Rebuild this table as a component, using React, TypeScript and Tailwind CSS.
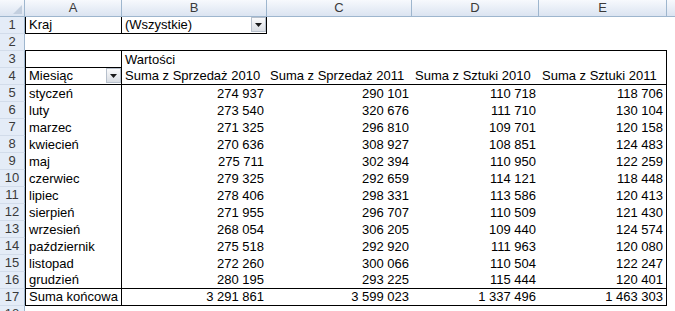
const COLS = "grid grid-cols-[25px_97px_145px_145px_127px_128px_1fr]";

type Row = [string, string, string, string, string];

const DATA: Row[] = [
  ["styczeń", "274 937", "290 101", "110 718", "118 706"],
  ["luty", "273 540", "320 676", "111 710", "130 104"],
  ["marzec", "271 325", "296 810", "109 701", "120 158"],
  ["kwiecień", "270 636", "308 927", "108 851", "124 483"],
  ["maj", "275 711", "302 394", "110 950", "122 259"],
  ["czerwiec", "279 325", "292 659", "114 121", "118 448"],
  ["lipiec", "278 406", "298 331", "113 586", "120 413"],
  ["sierpień", "271 955", "296 707", "110 509", "121 430"],
  ["wrzesień", "268 054", "306 205", "109 440", "124 574"],
  ["październik", "275 518", "292 920", "111 963", "120 080"],
  ["listopad", "272 260", "300 066", "110 504", "122 247"],
  ["grudzień", "280 195", "293 225", "115 444", "120 401"],
];

const TOTAL: Row = ["Suma końcowa", "3 291 861", "3 599 023", "1 337 496", "1 463 303"];

function DropButton() {
  return (
    <div className="ml-auto flex h-[15px] w-[15px] shrink-0 items-center justify-center self-start border border-[#b7c0cc] bg-gradient-to-b from-[#fbfbfc] to-[#d9dde3]">
      <svg width="7" height="4" viewBox="0 0 7 4">
        <path d="M0 0h7L3.5 4z" fill="#1a1a1a" />
      </svg>
    </div>
  );
}

function RowHead({ n }: { n: number }) {
  return (
    <div className="flex items-end justify-center border-r border-b border-r-[#9eb6ce] border-b-[#d2dcea] bg-[#e4ecf7] pb-[1px] text-[#3a3a3a] leading-[15px]">
      {n}
    </div>
  );
}

function Cell({
  children,
  className = "",
  right = false,
}: {
  children?: React.ReactNode;
  className?: string;
  right?: boolean;
}) {
  return (
    <div
      className={`flex items-end overflow-visible whitespace-nowrap pb-[1px] leading-[15px] ${
        right ? "justify-end pr-[3px]" : "pl-[3px]"
      } ${className}`}
    >
      {children}
    </div>
  );
}

function ColHead({ label, last = false }: { label: string; last?: boolean }) {
  return (
    <div
      className={`flex items-center justify-center border-b border-[#9eb6ce] bg-gradient-to-b from-[#f7f9fd] to-[#dbe4f1] text-[#3a3a3a] leading-[16px] ${
        last ? "" : "border-r"
      }`}
    >
      {label}
    </div>
  );
}

export default function App() {
  return (
    <div className="h-[311px] w-[675px] overflow-hidden bg-white text-[13px] text-black [font-family:'Liberation_Sans',Arial,sans-serif]">
      {/* column headings */}
      <div className={`${COLS} h-[17px]`}>
        <div className="flex items-end justify-end border-r border-b border-[#9eb6ce] bg-gradient-to-b from-[#f7f9fd] to-[#dbe4f1] p-[2px]">
          <svg width="9" height="9" viewBox="0 0 9 9">
            <path d="M9 0v9H0z" fill="#c3cfdf" />
          </svg>
        </div>
        <ColHead label="A" />
        <ColHead label="B" />
        <ColHead label="C" />
        <ColHead label="D" />
        <ColHead label="E" />
        <ColHead label="" last />
      </div>

      {/* row 1 - report filter */}
      <div className={`${COLS} h-[17px]`}>
        <RowHead n={1} />
        <Cell className="border-l border-r border-b border-black pl-[2px]">Kraj</Cell>
        <Cell className="border-r border-b border-black pr-0">
          <span>(Wszystkie)</span>
          <DropButton />
        </Cell>
        <div />
        <div />
        <div />
        <div />
      </div>

      {/* row 2 */}
      <div className={`${COLS} h-[17px]`}>
        <RowHead n={2} />
        <div className="border-b border-black" />
        <div className="border-b border-black" />
        <div className="border-b border-black" />
        <div className="border-b border-black" />
        <div className="border-b border-black" />
        <div />
      </div>

      {/* row 3 */}
      <div className={`${COLS} h-[17px]`}>
        <RowHead n={3} />
        <div className="border-l border-r border-b border-black" />
        <Cell>Wartości</Cell>
        <div />
        <div />
        <div className="border-r border-black" />
        <div />
      </div>

      {/* row 4 - column labels */}
      <div className={`${COLS} h-[17px]`}>
        <RowHead n={4} />
        <Cell className="border-l border-r border-b border-black pl-[2px]">
          <span>Miesiąc</span>
          <DropButton />
        </Cell>
        <Cell className="border-b border-black">Suma z Sprzedaż 2010</Cell>
        <Cell className="border-b border-black">Suma z Sprzedaż 2011</Cell>
        <Cell className="border-b border-black">Suma z Sztuki 2010</Cell>
        <Cell className="border-r border-b border-black">Suma z Sztuki 2011</Cell>
        <div />
      </div>

      {/* data rows */}
      {DATA.map((r, i) => {
        const bottom = i === DATA.length - 1 ? "border-b border-black" : "";
        return (
          <div key={r[0]} className={`${COLS} h-[17px]`}>
            <RowHead n={i + 5} />
            <Cell className={`border-l border-r border-black pl-[2px] ${bottom}`}>{r[0]}</Cell>
            <Cell right className={bottom}>{r[1]}</Cell>
            <Cell right className={bottom}>{r[2]}</Cell>
            <Cell right className={bottom}>{r[3]}</Cell>
            <Cell right className={`border-r border-black ${bottom}`}>{r[4]}</Cell>
            <div />
          </div>
        );
      })}

      {/* grand total */}
      <div className={`${COLS} h-[17px]`}>
        <RowHead n={17} />
        <Cell className="border-l border-r border-b border-black pl-[2px]">{TOTAL[0]}</Cell>
        <Cell right className="border-b border-black">{TOTAL[1]}</Cell>
        <Cell right className="border-b border-black">{TOTAL[2]}</Cell>
        <Cell right className="border-b border-black">{TOTAL[3]}</Cell>
        <Cell right className="border-r border-b border-black">{TOTAL[4]}</Cell>
        <div />
      </div>

      {/* row 18, cut off */}
      <div className={`${COLS} h-[17px]`}>
        <RowHead n={18} />
      </div>
    </div>
  );
}
